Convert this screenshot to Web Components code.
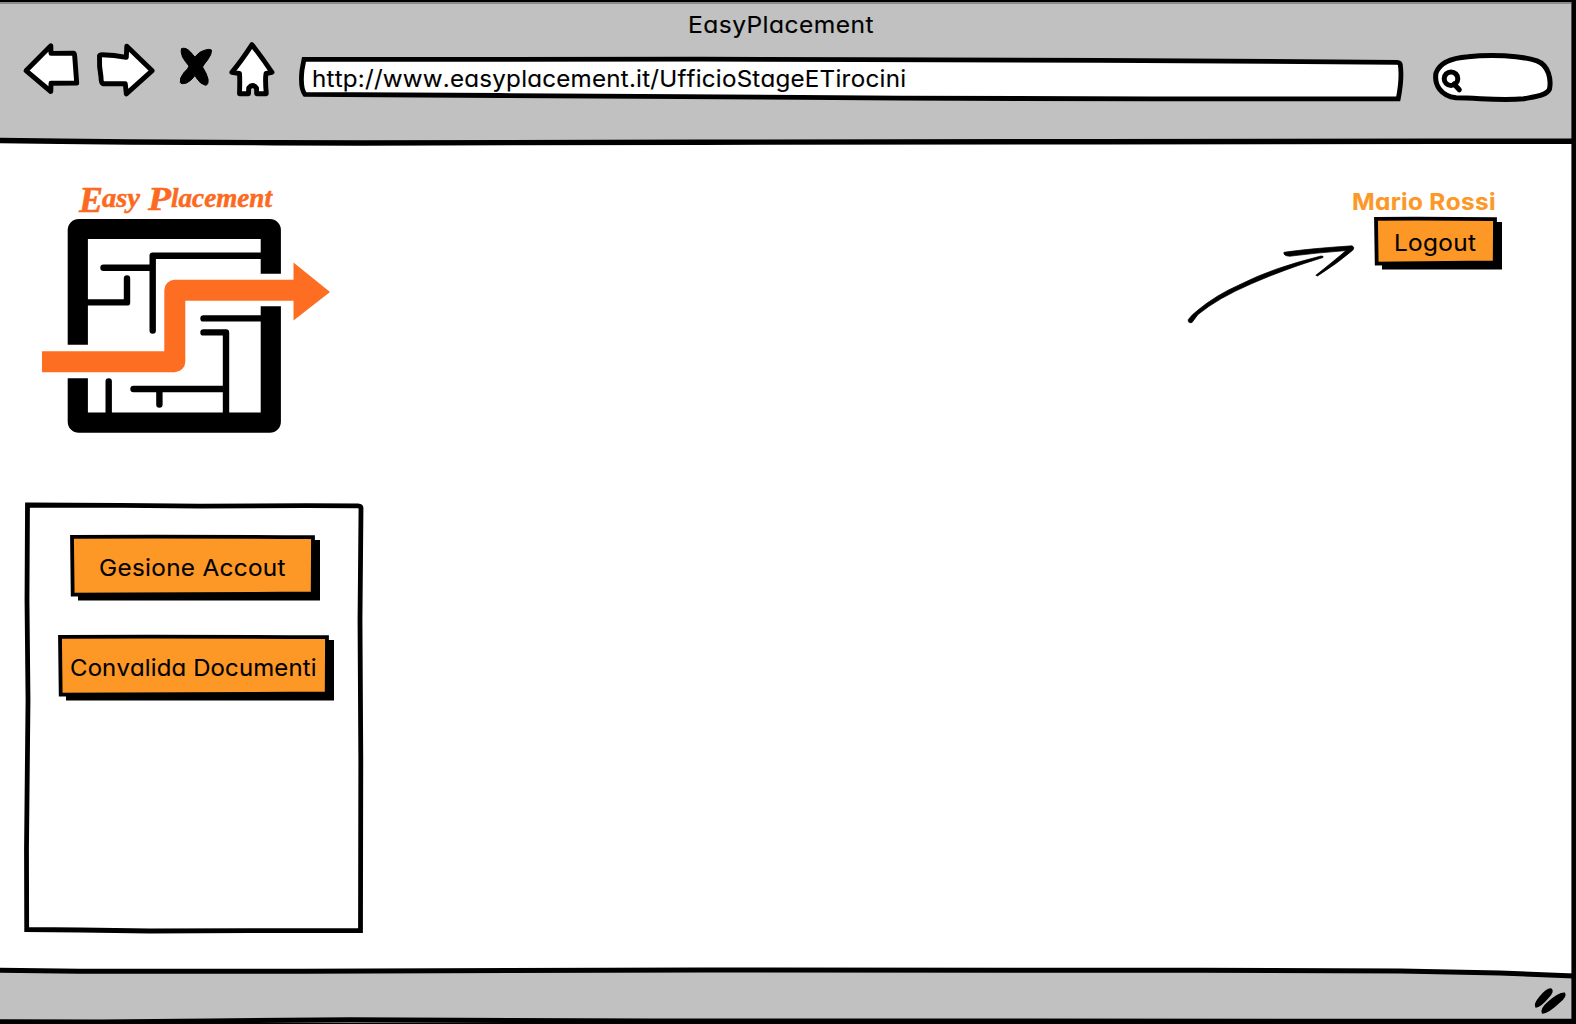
<!DOCTYPE html>
<html lang="it">
<head>
<meta charset="utf-8">
<title>EasyPlacement</title>
<style>
html,body{margin:0;padding:0;background:#fff;overflow:hidden}
body{font-family:Inter,"Open Sans",sans-serif;color:#000}
</style>
</head>
<body>
<easy-app></easy-app>
<script>
class Base extends HTMLElement{
  connectedCallback(){
    if(this.shadowRoot) return;
    this.attachShadow({mode:'open'}).innerHTML=this.view();
    this.ready();
  }
  view(){return ''}
  ready(){}
}

/* Text that fills the given width, partly by wider glyphs and partly by tracking. */
customElements.define('fit-text',class extends Base{
  view(){
    const w=this.getAttribute('width');
    return `<style>:host{display:block;width:${w}px;height:28px;font-size:23.5px;line-height:28px;white-space:pre;font-feature-settings:"cv11" 1,"calt" 0,"liga" 0;font-kerning:none;-webkit-text-stroke:.12px currentColor}span{display:inline-block;transform-origin:0 0}</style><span><slot></slot></span>`;
  }
  ready(){
    const s=this.shadowRoot.querySelector('span'), n=this.textContent.trim().length;
    const target=+this.getAttribute('width'), own=s.getBoundingClientRect().width;
    const k=1+(target/own-1)*.6;
    s.style.letterSpacing=(target/k-own)/(n-1)+'px';
    s.style.transform=`scaleX(${k})`;
  }
});

const art={
back:['20 40 64 70','<path d="M26 70.7 50.8 45.8 51 53.4 73.5 53.2Q74.5 53.4 74.7 56L76.7 83 51 83.3 50.8 91.5Z" fill="#fff" stroke="#000" stroke-width="4.9" stroke-linejoin="round"/>'],
forward:['94 40 64 70','<path d="M99.5 56 Q100 54.7 102 54.7 Q114 54.8 126.3 57.3L126.8 46.2 152.2 70.7 126.3 93.8 125.3 83.8 103 83.8 Q100.9 83 101 77 Q99 66 99.5 56Z" fill="#fff" stroke="#000" stroke-width="4.9" stroke-linejoin="round"/>'],
stop:['174 40 44 70','<path stroke="#000" stroke-width="1" d="M181.5 48.6Q186 47 190.5 52L194.8 57Q200 51 204.5 50.3 209 48.5 211.5 50 212 54 207.5 60 203.5 65 202.5 67 207 74 208 79 208.7 85 205.5 85.3 200 84 196.5 78L195 75.5Q191 81 186.5 83 181 84.5 180.3 82.5 179.5 78 184 72.5 188.5 68.5 189 66 185 61.5 182.5 57 180.3 51 181.5 48.6Z"/>'],
home:['226 40 52 70','<path d="M252 44.7Q263 59 272 72.3L266 73.5Q265 80 266.3 93.7L256.7 93.7 256.5 88Q252.5 83 248.7 88L248.5 93.7 239.5 93.7Q240 80 239.5 73.5L231.8 72.3Q240 63 252 44.7Z" fill="#fff" stroke="#000" stroke-width="4.9" stroke-linejoin="round"/>'],
address:['296 40 1110 70','<path d="M304 59.4 400 59.4 700 59.2 860 59.6 1100 60.3 1270 61.4 1397 62.3 Q1400 62.5 1400.3 64.5 Q1402.3 79 1398.2 98.9L1150 98.8 900 98.2 800 97.3 640 96.4 500 95.5 305 94.4Q300 88 302 70Z" fill="#fff" stroke="#000" stroke-width="4.8"/>'],
search:['1428 40 126 70','<path d="M1456 97.8C1441 96 1434 85 1436 73 1439.5 63 1450 58 1468 56.7 1490 54.3 1520 55.3 1537 60.8 1549 65.3 1551.3 80 1549.5 89 1547 95 1538 96 1524 98.8 1500 101.3 1480 98 1456 97.8Z" fill="#fff" stroke="#000" stroke-width="5"/><circle cx="1451" cy="78.7" r="6.8" fill="#fff" stroke="#000" stroke-width="5"/><path d="M1454 84 1459.3 89.8" stroke="#000" stroke-width="5" stroke-linecap="round"/>'],
grip:['1530 984 40 34','<path stroke="#000" stroke-width="1.4" d="M1536 1007Q1534 1004 1540 997 1547 988.5 1551 989 1554 991 1548.5 997 1540 1007 1536 1007ZM1542.5 1013Q1540.5 1009 1548 1002.5 1559 993 1564.5 993.3 1566.5 996 1559.5 1002 1548 1013 1542.5 1013Z"/>'],
arrow:['1184 236 180 92','<path stroke="#000" stroke-width=".7" d="M1188.3 319.5Q1192 314.5 1198 310 1216 295 1240 284.5 1272 268 1321 256 1324 256 1323 257.5 1285 269 1252 283.5 1218 298 1198 314.5L1192 322.5Q1187.5 323.5 1188.3 319.5ZM1284 252.3Q1310 248.5 1352 245.8Q1355 247 1353 250Q1338 263 1317.5 276L1315.8 275.3Q1335 260 1346 250.6 1315 253 1290 256.2 1283 256 1284 252.3Z"/>'],
panel:['20 498 350 440','<path d="M27.5 505 120 505.3 200 506.2 306 505.7 358 505.8Q361 506 361 508L360 620 360.8 760 360.5 930.5 250 930.6 150 931 80 930 26.7 929.5 26.5 850 28 700 27 600Z" fill="#fff" stroke="#000" stroke-width="4.8"/>'],
maze:['40 180 300 260',`<rect x="77.8" y="229" width="193" height="193.7" rx="1" fill="#fff" stroke="#000" stroke-width="20.2" stroke-linejoin="round"/>
<path d="M60 344.7h40v33.6h-40zM255 273.7h40v32.6h-40z" fill="#fff"/>
<g fill="none" stroke="#000" stroke-width="6.4" stroke-linecap="round" stroke-linejoin="round"><path d="M103.5 267.7H152.7M152.7 330.5V255.8H262M86 302.4H127V278.5M203.5 318.4H262M203.5 332.4H226V414M133.5 389H226M159.4 389V404.5M108.7 381.5V414"/></g>
<path d="M42 361.7H174.8V290.2H295" fill="none" stroke="#fd6e22" stroke-width="21" stroke-linejoin="round"/><path d="M293.5 262.5 330 292 293.5 320.5Z" fill="#fd6e22"/>
<g fill="#fb6a20" stroke="#fb6a20" stroke-width=".5" font-family="'Liberation Serif',serif" font-style="italic" font-weight="700"><text x="79" y="212" font-size="35" textLength="24" lengthAdjust="spacingAndGlyphs">E</text><text x="102" y="206.5" font-size="27" textLength="38" lengthAdjust="spacingAndGlyphs">asy</text><text x="148" y="209.5" font-size="33" textLength="23" lengthAdjust="spacingAndGlyphs">P</text><text x="171" y="206.5" font-size="27" textLength="101" lengthAdjust="spacingAndGlyphs">lacement</text></g>`]
};
customElements.define('sketch-art',class extends Base{
  view(){
    const [vb,body]=art[this.getAttribute('name')], [,,w,h]=vb.split(' ');
    return `<style>:host{display:block;flex:none;width:${w}px;height:${h}px}svg{display:block}</style><svg width="${w}" height="${h}" viewBox="${vb}">${body}</svg>`;
  }
});

customElements.define('sketch-button',class extends Base{
  view(){
    const w=+this.getAttribute('w'),h=+this.getAttribute('h'),tx=this.getAttribute('tx'),ty=this.getAttribute('ty');
    return `<style>:host{display:grid;width:${w}px;height:${h}px}svg,div{grid-area:1/1}svg{display:block}div{padding:${ty}px 0 0 ${tx}px}</style>
<svg width="${w}" height="${h}"><path d="M8 6H${w}V${h-.5}H8Z"/><path d="M2 2.8Q${w/2} 2.4 ${w-7} 3.2L${w-7.3} ${h-7.5}Q${w/2} ${h-7} 2.7 ${h-6.3}Z" fill="#fd9827" stroke="#000" stroke-width="3.8"/></svg><div><slot></slot></div>`;
  }
});

customElements.define('browser-header',class extends Base{
  view(){return `<style>:host{display:block;height:142px;background:#c1c1c1}.title{height:29px;padding:11px 0 0 687.5px}.bar{display:flex}.fwd{margin-left:10px}.stop{margin-left:16px}.home{margin-left:8px}.url{display:grid;margin-left:18px}.url>*{grid-area:1/1}.url fit-text{margin:24.5px 0 0 15.5px}.s{margin-left:22px}.bar{padding-left:20px}</style>
<div class="title"><fit-text width="185.5">EasyPlacement</fit-text></div>
<div class="bar"><sketch-art name="back"></sketch-art><sketch-art class="fwd" name="forward"></sketch-art><sketch-art class="stop" name="stop"></sketch-art><sketch-art class="home" name="home"></sketch-art>
<div class="url"><sketch-art name="address"></sketch-art><fit-text width="594">http://www.easyplacement.it/UfficioStageETirocini</fit-text></div><sketch-art class="s" name="search"></sketch-art></div>`}
});

customElements.define('side-menu',class extends Base{
  view(){return `<style>:host{display:grid;width:350px;height:440px}:host>*{grid-area:1/1}div{display:flex;flex-direction:column;gap:33px;padding-top:36px}.a{margin-left:50px}.b{margin-left:38px}</style>
<sketch-art name="panel"></sketch-art>
<div><sketch-button class="a" w="250" h="67" tx="28.5" ty="20"><fit-text width="186.5">Gesione Accout</fit-text></sketch-button>
<sketch-button class="b" w="276" h="67" tx="12" ty="20"><fit-text width="246.5">Convalida Documenti</fit-text></sketch-button></div>`}
});

customElements.define('user-box',class extends Base{
  view(){return `<style>:host{display:flex;padding-top:46px}.arrow{margin-top:48px}.u{width:160px;margin-left:-12.5px}.name{color:#fd9827;font-weight:700;margin-left:.5px}.u sketch-button{margin:0 0 0 22.5px}</style>
<sketch-art class="arrow" name="arrow"></sketch-art><div class="u"><fit-text class="name" width="143.5">Mario Rossi</fit-text><sketch-button w="128" h="54" tx="20.5" ty="13"><fit-text width="82">Logout</fit-text></sketch-button></div>`}
});

customElements.define('browser-frame',class extends Base{
  view(){return `<style>:host{display:block;pointer-events:none}svg{display:block}</style><svg width="1576" height="1024" viewBox="0 0 1576 1024" fill="none" stroke="#000" stroke-width="5">
<path d="M0 1H1576" stroke-width="2"/><path d="M0 3H1571" stroke="#8b8b8b" stroke-width="2"/>
<path d="M0 140.5 60 141.3 130 142 275 142.7 360 143 700 142.2 1100 141.7 1440 141.2 1576 141.2" stroke-width="5.4"/>
<path d="M1573.8 0V1024" stroke-width="4.8"/>
<path d="M0 970.3 80 971.3 300 971.2 700 970 1200 970.2 1400 971 1500 973 1574 976"/>
<path d="M0 1021.8 100 1022 210 1021 350 1019.7 650 1021 1576 1021.2"/><path d="M0 1023.5H1576" stroke-width="1.5"/></svg>`}
});

customElements.define('easy-app',class extends Base{
  view(){return `<style>:host{display:grid;width:1576px;height:1024px;overflow:hidden}.page,browser-frame{grid-area:1/1}browser-frame{z-index:1}.page{display:flex;flex-direction:column}main{flex:1;display:flex;justify-content:space-between;align-items:flex-start;padding:0 65px 0 20px}.left{display:flex;flex-direction:column;gap:58px;padding-top:38px}.left .logo{margin-left:20px}footer{height:53px;background:#c1c1c1;clip-path:polygon(0 0,1400px 0,1576px 5px,1576px 53px,0 53px);display:flex;justify-content:flex-end;align-items:flex-start;padding:13px 6px 0 0;box-sizing:border-box}</style>
<div class="page"><browser-header></browser-header><main><div class="left"><sketch-art class="logo" name="maze"></sketch-art><side-menu></side-menu></div><user-box></user-box></main><footer><sketch-art name="grip"></sketch-art></footer></div><browser-frame></browser-frame>`}
});
</script>
</body>
</html>
